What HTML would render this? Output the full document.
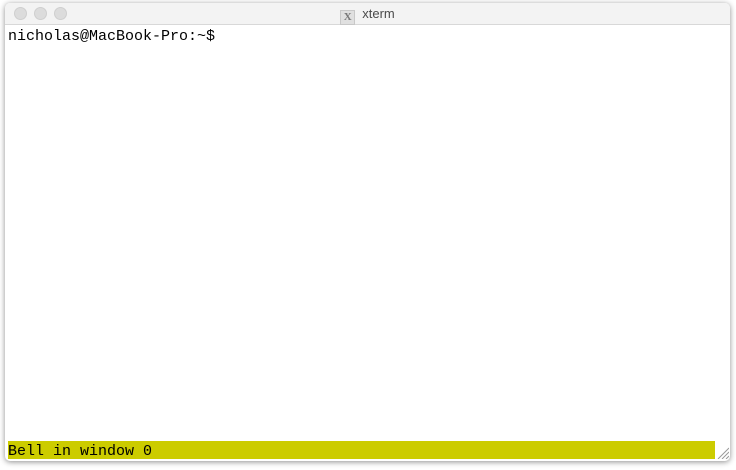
<!DOCTYPE html>
<html><head><meta charset="utf-8"><style>
html,body{margin:0;padding:0;background:#fff;width:736px;height:470px;overflow:hidden}
.win{position:absolute;left:5px;top:3px;width:725px;height:458px;border-radius:5px;background:#fff;box-shadow:0 1px 6px rgba(0,0,0,.45);overflow:hidden}
.tb{position:absolute;left:0;top:0;width:100%;height:21px;background:#f3f3f3;border-bottom:1px solid #d8d8d8}
.dot{position:absolute;top:4px;width:13px;height:13px;border-radius:50%;background:#dcdcdc;border:0.5px solid #cfcfcf;box-sizing:border-box}
.title{position:absolute;left:0;width:100%;top:3px;text-align:center;font:13px "Liberation Sans",sans-serif;color:#4a4a4a}
.xi{display:inline-block;width:13px;height:13px;background:#e0e0e0;border:1px solid #c8c8c8;font:bold 11px "Liberation Serif",serif;line-height:13px;color:#777;vertical-align:-2px;margin-right:7px}
.t{position:absolute;font:15px "Liberation Mono",monospace;color:#000;white-space:pre}
.bar{position:absolute;left:3px;top:438px;width:707px;height:18px;background:#cccc00}
.rz{position:absolute;left:710px;top:441px;width:14px;height:15px;background:#fff}
</style></head><body>
<div class="win">
 <div class="tb">
  <div class="dot" style="left:9px"></div>
  <div class="dot" style="left:29px"></div>
  <div class="dot" style="left:49px"></div>
  <div class="title"><span class="xi">X</span>xterm</div>
 </div>
 <div class="t" style="left:3px;top:25px">nicholas@MacBook-Pro:~$</div>
 <div class="bar"></div>
 <div class="t" style="left:3px;top:440px">Bell in window 0</div>
 <div class="rz"><svg width="14" height="15"><g stroke="#999" stroke-width="1"><line x1="3" y1="15" x2="14" y2="4"/><line x1="7" y1="15" x2="14" y2="8"/><line x1="11" y1="15" x2="14" y2="12"/></g></svg></div>
</div>
</body></html>
